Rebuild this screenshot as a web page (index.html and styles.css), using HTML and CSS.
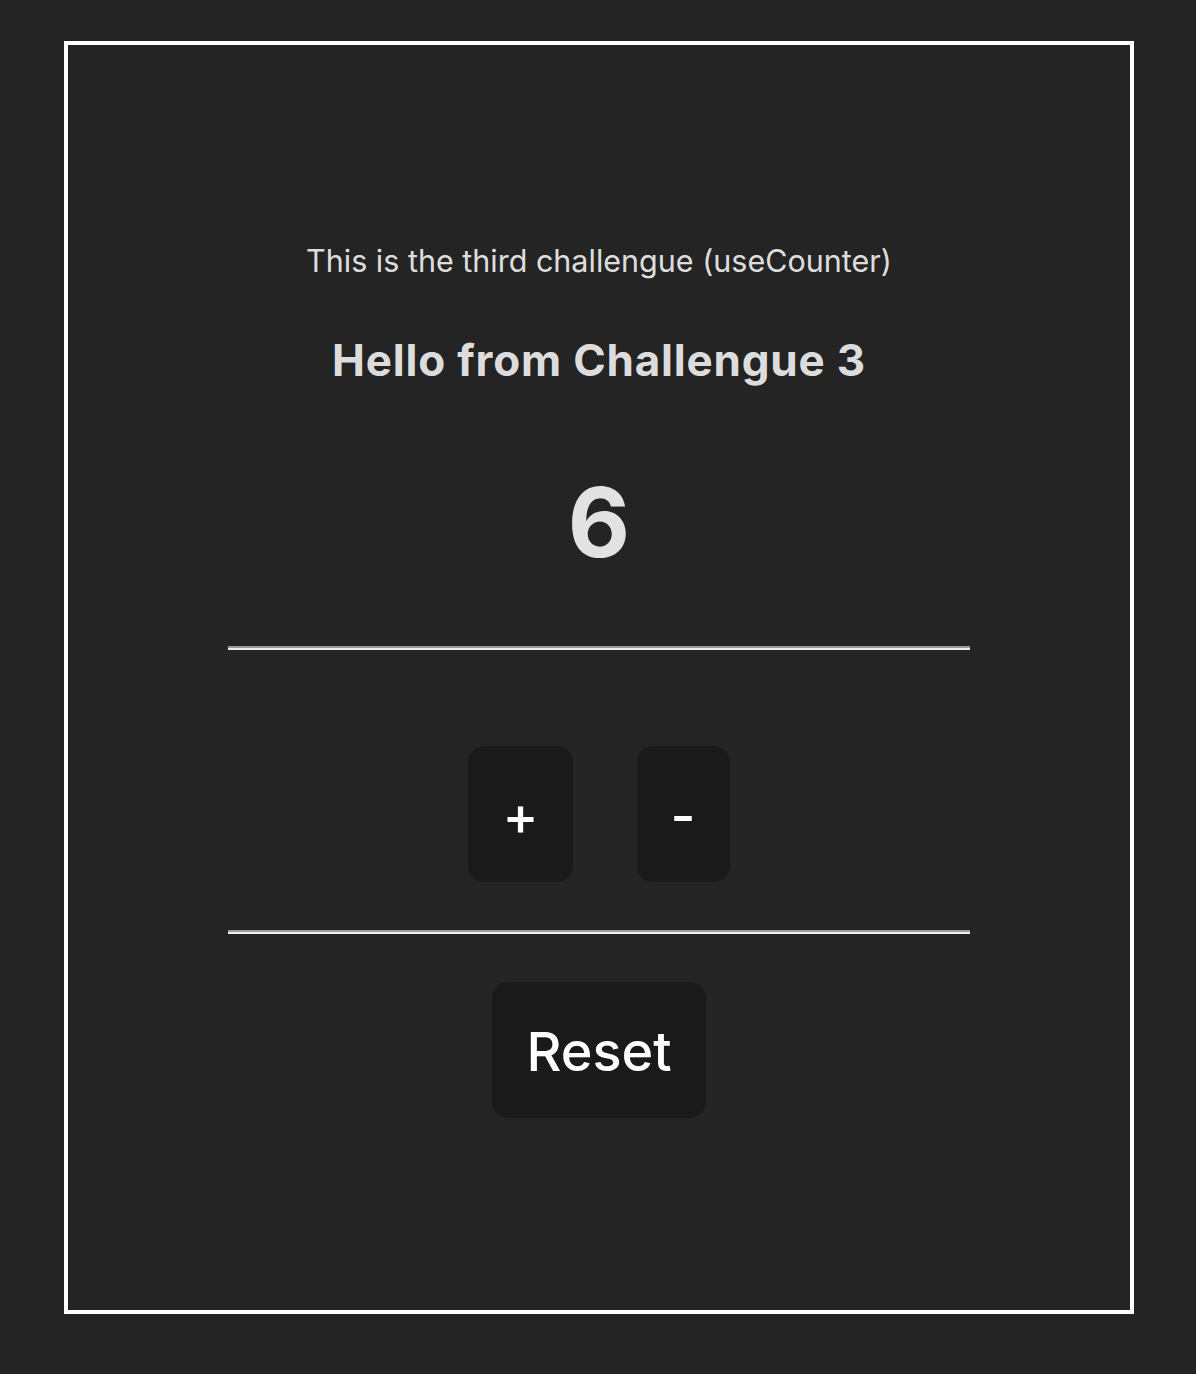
FILE: index.html
```html
<!DOCTYPE html>
<html lang="en">
<head>
<meta charset="utf-8">
<title>Challengue 3</title>
<link rel="stylesheet" href="styles.css">
</head>
<body>
<main class="frame">
  <p class="intro">This is the third challengue (useCounter)</p>
  <h2 class="title">Hello from Challengue 3</h2>
  <h1 class="count">6</h1>
  <hr class="rule rule-top">
  <div class="controls">
    <button class="btn">+</button>
    <button class="btn">-</button>
  </div>
  <hr class="rule rule-bottom">
  <button class="btn btn-reset">Reset</button>
</main>
</body>
</html>
```
FILE: styles.css
```css
* { box-sizing: border-box; }
html, body {
  margin: 0;
  padding: 0;
  background: #242424;
}
body {
  font-family: Inter, "Noto Sans", sans-serif;
  color: rgba(255, 255, 255, 0.87);
  padding-top: 41px;
  padding-left: 2px;
}
.frame {
  width: 1070px;
  height: 1273px;
  margin: 0 auto;
  border: 4px solid #ffffff;
  display: flex;
  flex-direction: column;
  align-items: center;
  padding-top: 198px;
}
.intro {
  margin: 0;
  font-size: 30.5px;
  line-height: 36px;
  font-weight: 400;
}
.title {
  margin: 55px 0 0;
  font-size: 44px;
  line-height: 52px;
  font-weight: 700;
  letter-spacing: 0.8px;
}
.count {
  margin: 78px 0 0;
  font-size: 96px;
  line-height: 116px;
  font-weight: 700;
}
.rule {
  width: 742px;
  height: 4px;
  margin: 0;
  border: 0;
  border-top: 2px solid #9a9a9a;
  border-bottom: 2px solid #eeeeee;
}
.rule-top { margin-top: 66px; }
.rule-bottom { margin-top: 48px; }
.controls {
  display: flex;
  gap: 64px;
  margin-top: 96px;
}
.btn {
  height: 136px;
  padding: 4px 34px 0;
  border: 0;
  border-radius: 16px;
  background: #1a1a1a;
  color: #ffffff;
  font-family: Inter, "Noto Sans", sans-serif;
  font-size: 54px;
  font-weight: 500;
  line-height: 132px;
}
.btn-reset {
  margin-top: 48px;
}
```
